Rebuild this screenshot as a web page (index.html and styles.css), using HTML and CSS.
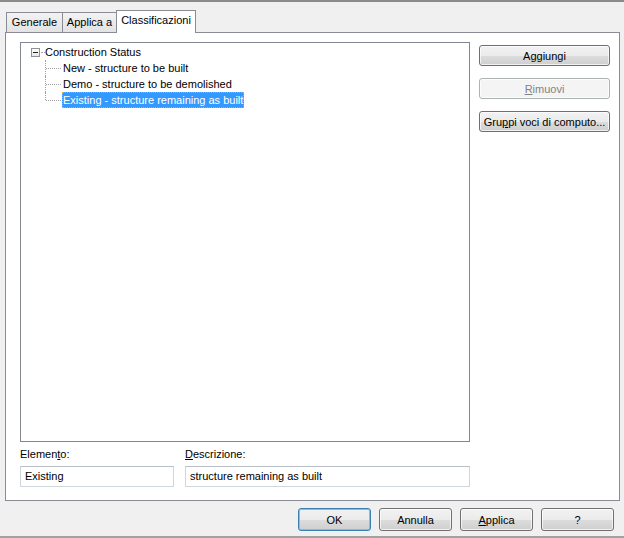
FILE: index.html
```html
<!DOCTYPE html>
<html lang="it">
  <head>
    <meta charset="UTF-8" />
    <title>Classificazioni</title>
    <link rel="stylesheet" href="styles.css">
  </head>
  <body>
    <div class="dialog">
      <ul class="tabs">
        <li class="tab gen">Generale</li>
        <li class="tab app">Applica a</li>
        <li class="tab active">Classificazioni</li>
      </ul>
      <section class="panel">
        <div class="main">
          <div class="tree">
            <div class="node root">
              <span class="toggle"></span>
              <span class="stub"></span>
              <span class="label">Construction Status</span>
            </div>
            <ul class="children">
              <li class="node"><span class="label">New - structure to be built</span></li>
              <li class="node"><span class="label">Demo - structure to be demolished</span></li>
              <li class="node last"><span class="label selected">Existing - structure remaining as built</span></li>
            </ul>
          </div>
          <div class="fields">
            <div class="field short">
              <label>Elemen<u>t</u>o:</label>
              <div class="input">Existing</div>
            </div>
            <div class="field long">
              <label><u>D</u>escrizione:</label>
              <div class="input">structure remaining as built</div>
            </div>
          </div>
        </div>
        <div class="side">
          <button class="btn">A<u>g</u>giungi</button>
          <button class="btn" disabled><u>R</u>imuovi</button>
          <button class="btn">Gru<u>p</u>pi voci di computo...</button>
        </div>
      </section>
      <footer class="actions">
        <button class="btn wide default">OK</button>
        <button class="btn wide">Annulla</button>
        <button class="btn wide"><u>A</u>pplica</button>
        <button class="btn wide">?</button>
      </footer>
    </div>
  </body>
</html>
```

FILE: styles.css
```css
* {
  box-sizing: border-box;
  margin: 0;
  padding: 0;
}
body {
  background: #f0f0f0;
  font-family: "Liberation Sans", Arial, sans-serif;
  font-size: 11px;
  color: #000;
}
.dialog {
  width: 624px;
  height: 538px;
  border-top: 2px solid #8a8a8a;
  border-bottom: 2px solid #a0a0a0;
  display: flex;
  flex-direction: column;
}

/* tabs */
.tabs {
  display: flex;
  list-style: none;
  padding: 7px 0 0 6px;
  height: 30px;
  align-items: flex-end;
}
.tab {
  height: 20px;
  line-height: 18px;
  text-align: center;
  white-space: nowrap;
  border: 1px solid #898c95;
  border-bottom: none;
  background: linear-gradient(#f2f2f2, #e3e3e3);
  margin-right: -1px;
}
.tab.gen {
  width: 57px;
}
.tab.app {
  width: 55px;
}
.tab.active {
  width: 80px;
  height: 23px;
  background: #fff;
  line-height: 18px;
  position: relative;
  top: 1px;
  z-index: 1;
}

/* panel */
.panel {
  margin: 0 4px 0 5px;
  height: 469px;
  border: 1px solid #898c95;
  background: #fff;
  display: flex;
  padding: 9px 9px 0 14px;
}
.main {
  display: flex;
  flex-direction: column;
  width: 450px;
}
.tree {
  height: 400px;
  border: 1px solid #828790;
  padding: 1px 0 0 10px;
}
.node {
  height: 16px;
  line-height: 16px;
  display: flex;
  align-items: center;
  white-space: nowrap;
}
.root .toggle {
  width: 9px;
  height: 9px;
  border: 1px solid #919191;
  background: linear-gradient(#fff, #e6e6e6);
  position: relative;
}
.root .toggle::after {
  content: "";
  position: absolute;
  left: 1px;
  top: 3px;
  width: 5px;
  height: 1px;
  background: #222;
}
.root .stub {
  width: 4px;
  margin-left: 1px;
  border-top: 1px dotted #a0a0a0;
}
.root .label {
  padding-left: 0;
}
.children {
  list-style: none;
  margin-left: 14px;
}
.children .node {
  position: relative;
  padding-left: 17px;
}
.children .node::before {
  content: "";
  position: absolute;
  left: 0;
  top: 0;
  height: 16px;
  border-left: 1px dotted #a0a0a0;
}
.children .node.last::before {
  height: 8px;
}
.children .node::after {
  content: "";
  position: absolute;
  left: 1px;
  top: 8px;
  width: 15px;
  border-top: 1px dotted #a0a0a0;
}
.children .label {
  padding: 0 1px;
  height: 16px;
}
.label.selected {
  background: #3399ff;
  color: #fff;
  outline: 1px dotted #e8a040;
  outline-offset: -1px;
}

/* fields */
.fields {
  display: flex;
  gap: 11px;
  margin-top: 4px;
}
.field label {
  display: block;
  height: 20px;
  line-height: 16px;
}
.field.short {
  width: 154px;
}
.field.long {
  width: 285px;
}
.input {
  height: 21px;
  border: 1px solid #d0d6de;
  border-top-color: #b8bfc9;
  padding: 0 4px;
  line-height: 19px;
}

/* buttons */
.side {
  margin-left: 9px;
  padding-top: 3px;
  display: flex;
  flex-direction: column;
  gap: 12px;
}
.btn {
  font: inherit;
  color: #000;
  width: 131px;
  height: 21px;
  white-space: nowrap;
  border: 1px solid #707070;
  border-radius: 3px;
  background: linear-gradient(#f2f2f2 0, #ebebeb 50%, #dddddd 51%, #cfcfcf 100%);
  box-shadow: inset 0 0 0 1px rgba(255, 255, 255, 0.7);
  padding: 0;
}
.btn:disabled {
  border-color: #adb2b5;
  background: #f4f4f4;
  color: #838383;
}
.actions {
  display: flex;
  justify-content: flex-end;
  gap: 8px;
  padding: 7px 10px 0 0;
}
.btn.wide {
  width: 73px;
  height: 23px;
}
.btn.default {
  border-color: #3c7fb1;
  box-shadow: inset 0 0 0 1px #48d8fb;
}
```
